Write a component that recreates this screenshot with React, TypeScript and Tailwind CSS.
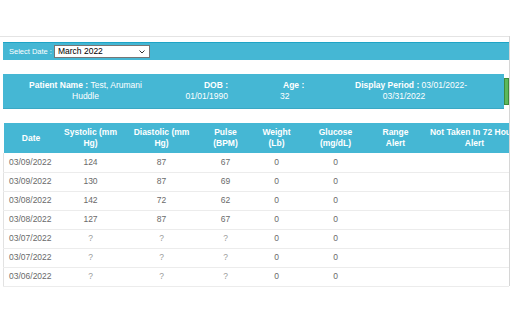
import React from "react";

const cols = [
  { label: ["Date"], w: 55 },
  { label: ["Systolic (mm", "Hg)"], w: 64 },
  { label: ["Diastolic (mm", "Hg)"], w: 78 },
  { label: ["Pulse", "(BPM)"], w: 50 },
  { label: ["Weight", "(Lb)"], w: 52 },
  { label: ["Glucose", "(mg/dL)"], w: 66 },
  { label: ["Range", "Alert"], w: 54 },
  { label: ["Not Taken In 72 Hours", "Alert"], w: 104 },
];

const rows = [
  ["03/09/2022", "124", "87", "67", "0", "0"],
  ["03/09/2022", "130", "87", "69", "0", "0"],
  ["03/08/2022", "142", "72", "62", "0", "0"],
  ["03/08/2022", "127", "87", "67", "0", "0"],
  ["03/07/2022", "?", "?", "?", "0", "0"],
  ["03/07/2022", "?", "?", "?", "0", "0"],
  ["03/06/2022", "?", "?", "?", "0", "0"],
];

export default function App() {
  return (
    <div className="w-[512px] h-[320px] bg-white overflow-hidden font-['Liberation_Sans',Arial,sans-serif] flex">
      <div className="w-[509px] shrink-0 overflow-hidden">
        <div className="h-[36px]" />
        <div className="border-t border-[#e4e4e4] pt-[5px] pl-[3px]">
          <div className="h-[18px] w-[507px] bg-[#45b7d4] border-t border-[#1ea4c6] flex items-center pl-[6px]">
            <span className="text-white text-[7.5px] leading-none mr-[2px]">Select Date :</span>
            <div className="h-[13px] w-[96px] bg-white border border-[#767676] flex items-center justify-between pl-[3px] pr-[4px]">
              <span className="text-[8.5px] leading-none text-black">March 2022</span>
              <svg width="6" height="4" viewBox="0 0 6 4">
                <path d="M0.5 0.5 L3 3 L5.5 0.5" fill="none" stroke="#333" strokeWidth="1" />
              </svg>
            </div>
          </div>
        </div>
        <div className="h-[14px]" />
        <div className="pl-[3px] flex items-center">
          <div className="h-[35px] w-[504px] bg-[#45b7d4] border-b border-[#3aa8c4] flex items-center text-white text-[8.5px] leading-[11px]">
            <div className="w-[165px] text-center">
              <span className="font-bold">Patient Name : </span>Test, Arumani
              <br />
              Huddle
            </div>
            <div className="w-[60px] text-right">
              <span className="font-bold">DOB :</span>
              <br />
              01/01/1990
            </div>
            <div className="w-[60px] ml-[52px] text-left">
              <span className="font-bold pl-[3px]">Age :</span>
              <br />
              32
            </div>
            <div className="w-[142px] text-center">
              <span className="font-bold">Display Period : </span>03/01/2022-
              <br />
              <span className="pr-[14px]">03/31/2022</span>
            </div>
          </div>
          <div className="h-[27px] w-[5px] bg-[#5cb85c] border border-[#3d8b3d] shrink-0" />
        </div>
        <div className="h-[14px]" />
        <div className="pl-[3px]">
          <table className="table-fixed border-collapse w-[523px]">
            <colgroup>
              {cols.map((c, i) => (
                <col key={i} style={{ width: c.w }} />
              ))}
            </colgroup>
            <thead>
              <tr className="bg-[#45b7d4] h-[30px]">
                {cols.map((c, i) => (
                  <th key={i} className="px-[4px] text-center align-middle text-white font-bold text-[8.5px] leading-[11px] whitespace-nowrap">
                    {c.label.map((l, j) => (
                      <div key={j}>{l}</div>
                    ))}
                  </th>
                ))}
              </tr>
            </thead>
            <tbody className="border-l border-[#e2e2e2]">
              {rows.map((r, i) => (
                <tr key={i} className="h-[19px] border-b border-[#ececec] text-[8.5px] text-[#6a6a6a]">
                  {r.map((v, j) => (
                    <td key={j} className={j === 0 ? "pl-[5px] text-left" : v === "?" ? "text-center text-[#9a9a9a]" : "text-center"}>
                      {v}
                    </td>
                  ))}
                  <td />
                  <td />
                </tr>
              ))}
            </tbody>
          </table>
        </div>
      </div>
      <div className="w-[1px] bg-[#d6d6d6] mt-[36px] h-[250px]" />
    </div>
  );
}
